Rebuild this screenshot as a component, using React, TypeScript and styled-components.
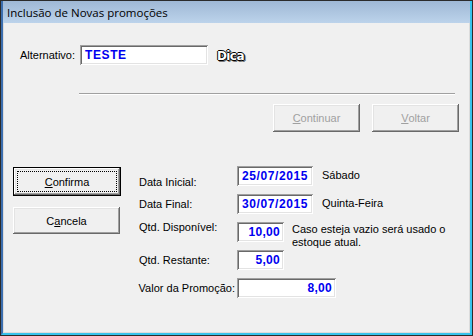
import React from "react";
import styled, { createGlobalStyle } from "styled-components";

const GlobalStyle = createGlobalStyle`
  html, body {
    margin: 0;
    padding: 0;
    background: #f0f0f0;
  }
  * {
    box-sizing: border-box;
  }
`;

const Frame = styled.div`
  width: 473px;
  height: 336px;
  border: 1px solid #2b2b2b;
  display: flex;
  flex-direction: column;
  font-family: "Liberation Sans", Arial, sans-serif;
  font-size: 11px;
  color: #000;
`;

const Inner = styled.div`
  flex: 1;
  display: flex;
  flex-direction: column;
  border-left: 2px solid #3c6eae;
  border-right: 2px solid #36c3ec;
  border-bottom: 2px solid #36c3ec;
`;

const TitleBar = styled.div`
  height: 22px;
  display: flex;
  align-items: center;
  padding-left: 4px;
  background: linear-gradient(#9fb8d5, #bcd3eb);
  font-family: "Open Sans", "Noto Sans", sans-serif;
  font-size: 11.5px;
  color: #000;
`;

const Body = styled.div`
  flex: 1;
  display: flex;
  flex-direction: column;
  background: #f0f0f0;
  border: 1px solid #dcdcdc;
  border-top: none;
`;

const TopRow = styled.div`
  display: flex;
  align-items: center;
  margin-top: 22px;
  padding-left: 16px;
`;

const TopLabel = styled.span`
  width: 60px;
`;

const Field = styled.div<{ $w: number; $align?: "left" | "right" }>`
  width: ${(p) => p.$w}px;
  height: 20px;
  background: #fff;
  box-shadow: inset 1px 1px #a0a0a0, inset -1px -1px #fff, inset 2px 2px #696969,
    inset -2px -2px #e3e3e3;
  display: flex;
  align-items: center;
  justify-content: ${(p) => (p.$align === "right" ? "flex-end" : "flex-start")};
  padding: 0 4px 0 5px;
  color: #0000f0;
  font-weight: bold;
  font-size: 12px;
  letter-spacing: ${(p) => (p.$align === "right" ? "0.3px" : "0.6px")};
`;

const Dica = styled.span`
  margin-left: 9px;
  margin-top: 2px;
  font-family: "DejaVu Sans", sans-serif;
  font-weight: bold;
  font-size: 12px;
  color: #fff;
  letter-spacing: -0.6px;
  text-shadow: 1px 0 #000, -1px 0 #000, 0 1px #000, 0 -1px #000, 2px 1px #7a7a7a,
    1px 2px #7a7a7a;
`;

const Separator = styled.div`
  margin: 28px 0 0 75px;
  width: 376px;
  height: 2px;
  border-top: 1px solid #a0a0a0;
  border-bottom: 1px solid #fff;
`;

const ButtonRow = styled.div`
  display: flex;
  justify-content: flex-end;
  gap: 12px;
  margin-top: 9px;
  padding-right: 10px;
`;

const Button = styled.button<{ $w: number; $h: number; $default?: boolean }>`
  width: ${(p) => p.$w}px;
  height: ${(p) => p.$h}px;
  margin: 0;
  padding: 0;
  background: #f0f0f0;
  font-family: "Liberation Sans", Arial, sans-serif;
  font-size: 11px;
  color: ${(p) => (p.disabled ? "#a0a0a0" : "#000")};
  border: ${(p) => (p.$default ? "1px solid #000" : "none")};
  box-shadow: inset -1px -1px #696969, inset 1px 1px #fff, inset -2px -2px #a0a0a0,
    inset 2px 2px #e3e3e3;
  position: relative;
  display: flex;
  align-items: center;
  justify-content: center;
  cursor: default;
  &::after {
    content: "";
    display: ${(p) => (p.$default ? "block" : "none")};
    position: absolute;
    inset: 3px;
    border: 1px dotted #000;
  }
`;

const Main = styled.div`
  display: flex;
  margin-top: 34px;
  padding-left: 9px;
  gap: 18px;
`;

const ActionColumn = styled.div`
  display: flex;
  flex-direction: column;
  gap: 11px;
  padding-top: 1px;
`;

const Form = styled.div`
  display: grid;
  grid-template-columns: 98px auto;
  grid-auto-rows: 20px;
  row-gap: 8px;
  align-items: center;
`;

const Label = styled.span<{ $shift?: number; $end?: boolean }>`
  margin-top: ${(p) => (p.$shift ?? 0) * 2}px;
  justify-self: ${(p) => (p.$end ? "end" : "start")};
  padding-right: ${(p) => (p.$end ? "2px" : "0")};
  white-space: nowrap;
`;

const Cell = styled.div`
  display: flex;
  align-items: flex-start;
  gap: 9px;
  height: 20px;
`;

const Note = styled.span<{ $wrap?: boolean }>`
  line-height: 13px;
  margin-top: ${(p) => (p.$wrap ? "1px" : "3px")};
  width: ${(p) => (p.$wrap ? "160px" : "auto")};
  margin-left: ${(p) => (p.$wrap ? "-1px" : "0")};
`;

export default function App() {
  return (
    <>
      <GlobalStyle />
      <Frame>
        <Inner>
          <TitleBar>Inclusão de Novas promoções</TitleBar>
          <Body>
            <TopRow>
              <TopLabel>Alternativo:</TopLabel>
              <Field $w={128}>TESTE</Field>
              <Dica>Dica</Dica>
            </TopRow>
            <Separator />
            <ButtonRow>
              <Button $w={87} $h={28} disabled>
                <u>C</u>ontinuar
              </Button>
              <Button $w={87} $h={28} disabled>
                <u>V</u>oltar
              </Button>
            </ButtonRow>
            <Main>
              <ActionColumn>
                <Button $w={108} $h={29} $default>
                  <u>C</u>onfirma
                </Button>
                <Button $w={107} $h={27}>
                  C<u>a</u>ncela
                </Button>
              </ActionColumn>
              <Form>
                <Label $shift={6}>Data Inicial:</Label>
                <Cell>
                  <Field $w={76}>25/07/2015</Field>
                  <Note>Sábado</Note>
                </Cell>
                <Label>Data Final:</Label>
                <Cell>
                  <Field $w={76}>30/07/2015</Field>
                  <Note>Quinta-Feira</Note>
                </Cell>
                <Label $shift={-5}>Qtd. Disponível:</Label>
                <Cell>
                  <Field $w={47} $align="right">
                    10,00
                  </Field>
                  <Note $wrap>Caso esteja vazio será usado o estoque atual.</Note>
                </Cell>
                <Label>Qtd. Restante:</Label>
                <Cell>
                  <Field $w={47} $align="right">
                    5,00
                  </Field>
                </Cell>
                <Label $end>Valor da Promoção:</Label>
                <Cell>
                  <Field $w={99} $align="right">
                    8,00
                  </Field>
                </Cell>
              </Form>
            </Main>
          </Body>
        </Inner>
      </Frame>
    </>
  );
}
